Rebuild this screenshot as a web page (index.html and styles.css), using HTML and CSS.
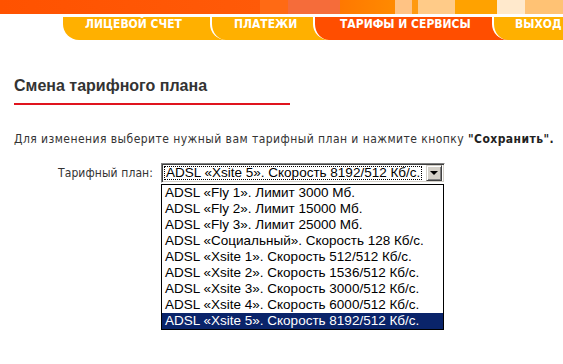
FILE: index.html
```
<!DOCTYPE html>
<html lang="ru">
<head>
<meta charset="utf-8">
<title>Смена тарифного плана</title>
<link rel="stylesheet" href="styles.css">
</head>
<body>
	<!-- header -->
	<div class="band"></div>
	<ul class="tabs">
		<li class="tab tab-account">ЛИЦЕВОЙ СЧЕТ</li>
		<li class="tab tab-pay">ПЛАТЕЖИ</li>
		<li class="tab tab-tariff active">ТАРИФЫ И СЕРВИСЫ</li>
		<li class="tab tab-exit">ВЫХОД</li>
	</ul>

	<!-- content -->
	<div class="content">
		<h2>Смена тарифного плана</h2>
		<p class="hint">Для изменения выберите нужный вам тарифный план и нажмите кнопку <b>"Сохранить".</b></p>

		<div class="row">
			<div class="label">Тарифный план:</div>
			<div class="combo">
				<div class="select">
					<span class="value">ADSL «Xsite 5». Скорость 8192/512 Кб/с.</span>
					<span class="arrow"></span>
				</div>
				<ul class="options">
					<li>ADSL «Fly 1». Лимит 3000 Мб.</li>
					<li>ADSL «Fly 2». Лимит 15000 Мб.</li>
					<li>ADSL «Fly 3». Лимит 25000 Мб.</li>
					<li>ADSL «Социальный». Скорость 128 Кб/с.</li>
					<li>ADSL «Xsite 1». Скорость 512/512 Кб/с.</li>
					<li>ADSL «Xsite 2». Скорость 1536/512 Кб/с.</li>
					<li>ADSL «Xsite 3». Скорость 3000/512 Кб/с.</li>
					<li>ADSL «Xsite 4». Скорость 6000/512 Кб/с.</li>
					<li class="selected">ADSL «Xsite 5». Скорость 8192/512 Кб/с.</li>
				</ul>
			</div>
		</div>
	</div>
</body>
</html>
```

FILE: styles.css
```
body {
	margin: 0;
	background: #FFFFFF;
	font: 12px "DejaVu Sans Condensed", Tahoma, sans-serif;
	color: #333333;
}

/* header */

.band {
	height: 14px;
	background: linear-gradient(to right,
		#FF5200 0, #FF5A08 260px,
		#FF6A14 260px, #FF6A14 288px,
		#F56C3A 288px, #F56C3A 340px,
		#FF7800 340px, #FF8A00 395px,
		#FFC384 395px, #FFC384 412px,
		#FF9A10 412px, #FF9A10 418px,
		#FFCB88 418px, #FFCB88 455px,
		#FFA200 455px, #FFA200 497px,
		#FFE9CC 497px, #FFE9CC 525px,
		#FFC274 525px, #FFC274 563px);
}

.tabs {
	display: flex;
	list-style: none;
	margin: 3px 0 0;
	padding: 0 0 0 63px;
	height: 23px;
	overflow: hidden;
}

.tab {
	flex: none;
	height: 23px;
	line-height: 25px;
	padding-left: 22px;
	box-sizing: border-box;
	background: #FFB000;
	color: #FFFFFF;
	font: bold 12px "Liberation Sans Narrow", "Arial Narrow", "DejaVu Sans Condensed", sans-serif;
	border-bottom-left-radius: 16px;
	border-left: 2px solid #FFFFFF;
	margin-left: -16px;
	white-space: nowrap;
}

.tab-account {
	margin-left: 0;
	border-left: 0;
	width: 163px;
}

.tab-pay {
	width: 119px;
}

.tab-tariff {
	width: 195px;
	padding-left: 25px;
}

.tab-exit {
	width: 100px;
	padding-left: 21px;
}

.tab.active {
	background: #FF4E00;
}

/* content */

.content {
	padding: 0 14px;
}

h2 {
	display: inline-block;
	margin: 37px 0 0;
	padding: 0 0 8px;
	width: 276px;
	font: bold 16px "Liberation Sans", Arial, sans-serif;
	color: #333333;
	border-bottom: 2px solid #E0141E;
}

.hint {
	margin: 27px 0 0;
	letter-spacing: 0.45px;
	white-space: nowrap;
}

.hint b {
	color: #222222;
}

.row {
	display: flex;
	margin-top: 17px;
}

.label {
	width: 139px;
	text-align: right;
	margin-right: 8px;
	line-height: 20px;
	letter-spacing: 0.1px;
}

.combo {
	width: 284px;
}

.select {
	display: flex;
	align-items: center;
	height: 20px;
	box-sizing: border-box;
	border: 1px solid;
	border-color: #808080 #FFFFFF #FFFFFF #808080;
	box-shadow: inset 1px 1px 0 #404040, inset -1px -1px 0 #D4D0C8;
	padding: 2px;
	font: 13.5px "Liberation Sans", Arial, sans-serif;
	color: #000000;
}

.value {
	flex: 1;
	min-width: 0;
	height: 14px;
	line-height: 14px;
	padding-left: 2px;
	outline: 1px dotted #000000;
	outline-offset: -1px;
	margin-right: 4px;
	white-space: nowrap;
}

.arrow {
	flex: none;
	width: 16px;
	height: 16px;
	box-sizing: border-box;
	background: #D4D0C8;
	border: 1px solid;
	border-color: #D4D0C8 #404040 #404040 #D4D0C8;
	box-shadow: inset 1px 1px 0 #FFFFFF, inset -1px -1px 0 #808080;
	position: relative;
}

.arrow::after {
	content: "";
	position: absolute;
	left: 3px;
	top: 5px;
	border-style: solid;
	border-width: 4px 4px 0;
	border-color: #000000 transparent transparent;
}

.options {
	list-style: none;
	margin: 1px 0 0;
	padding: 0;
	width: 283px;
	box-sizing: border-box;
	border: 1px solid #000000;
	font: 13.5px "Liberation Sans", Arial, sans-serif;
	color: #000000;
}

.options li {
	height: 16px;
	line-height: 16px;
	padding-left: 3px;
	white-space: nowrap;
}

.options li.selected {
	background: #0A246A;
	color: #FFFFFF;
}
```
